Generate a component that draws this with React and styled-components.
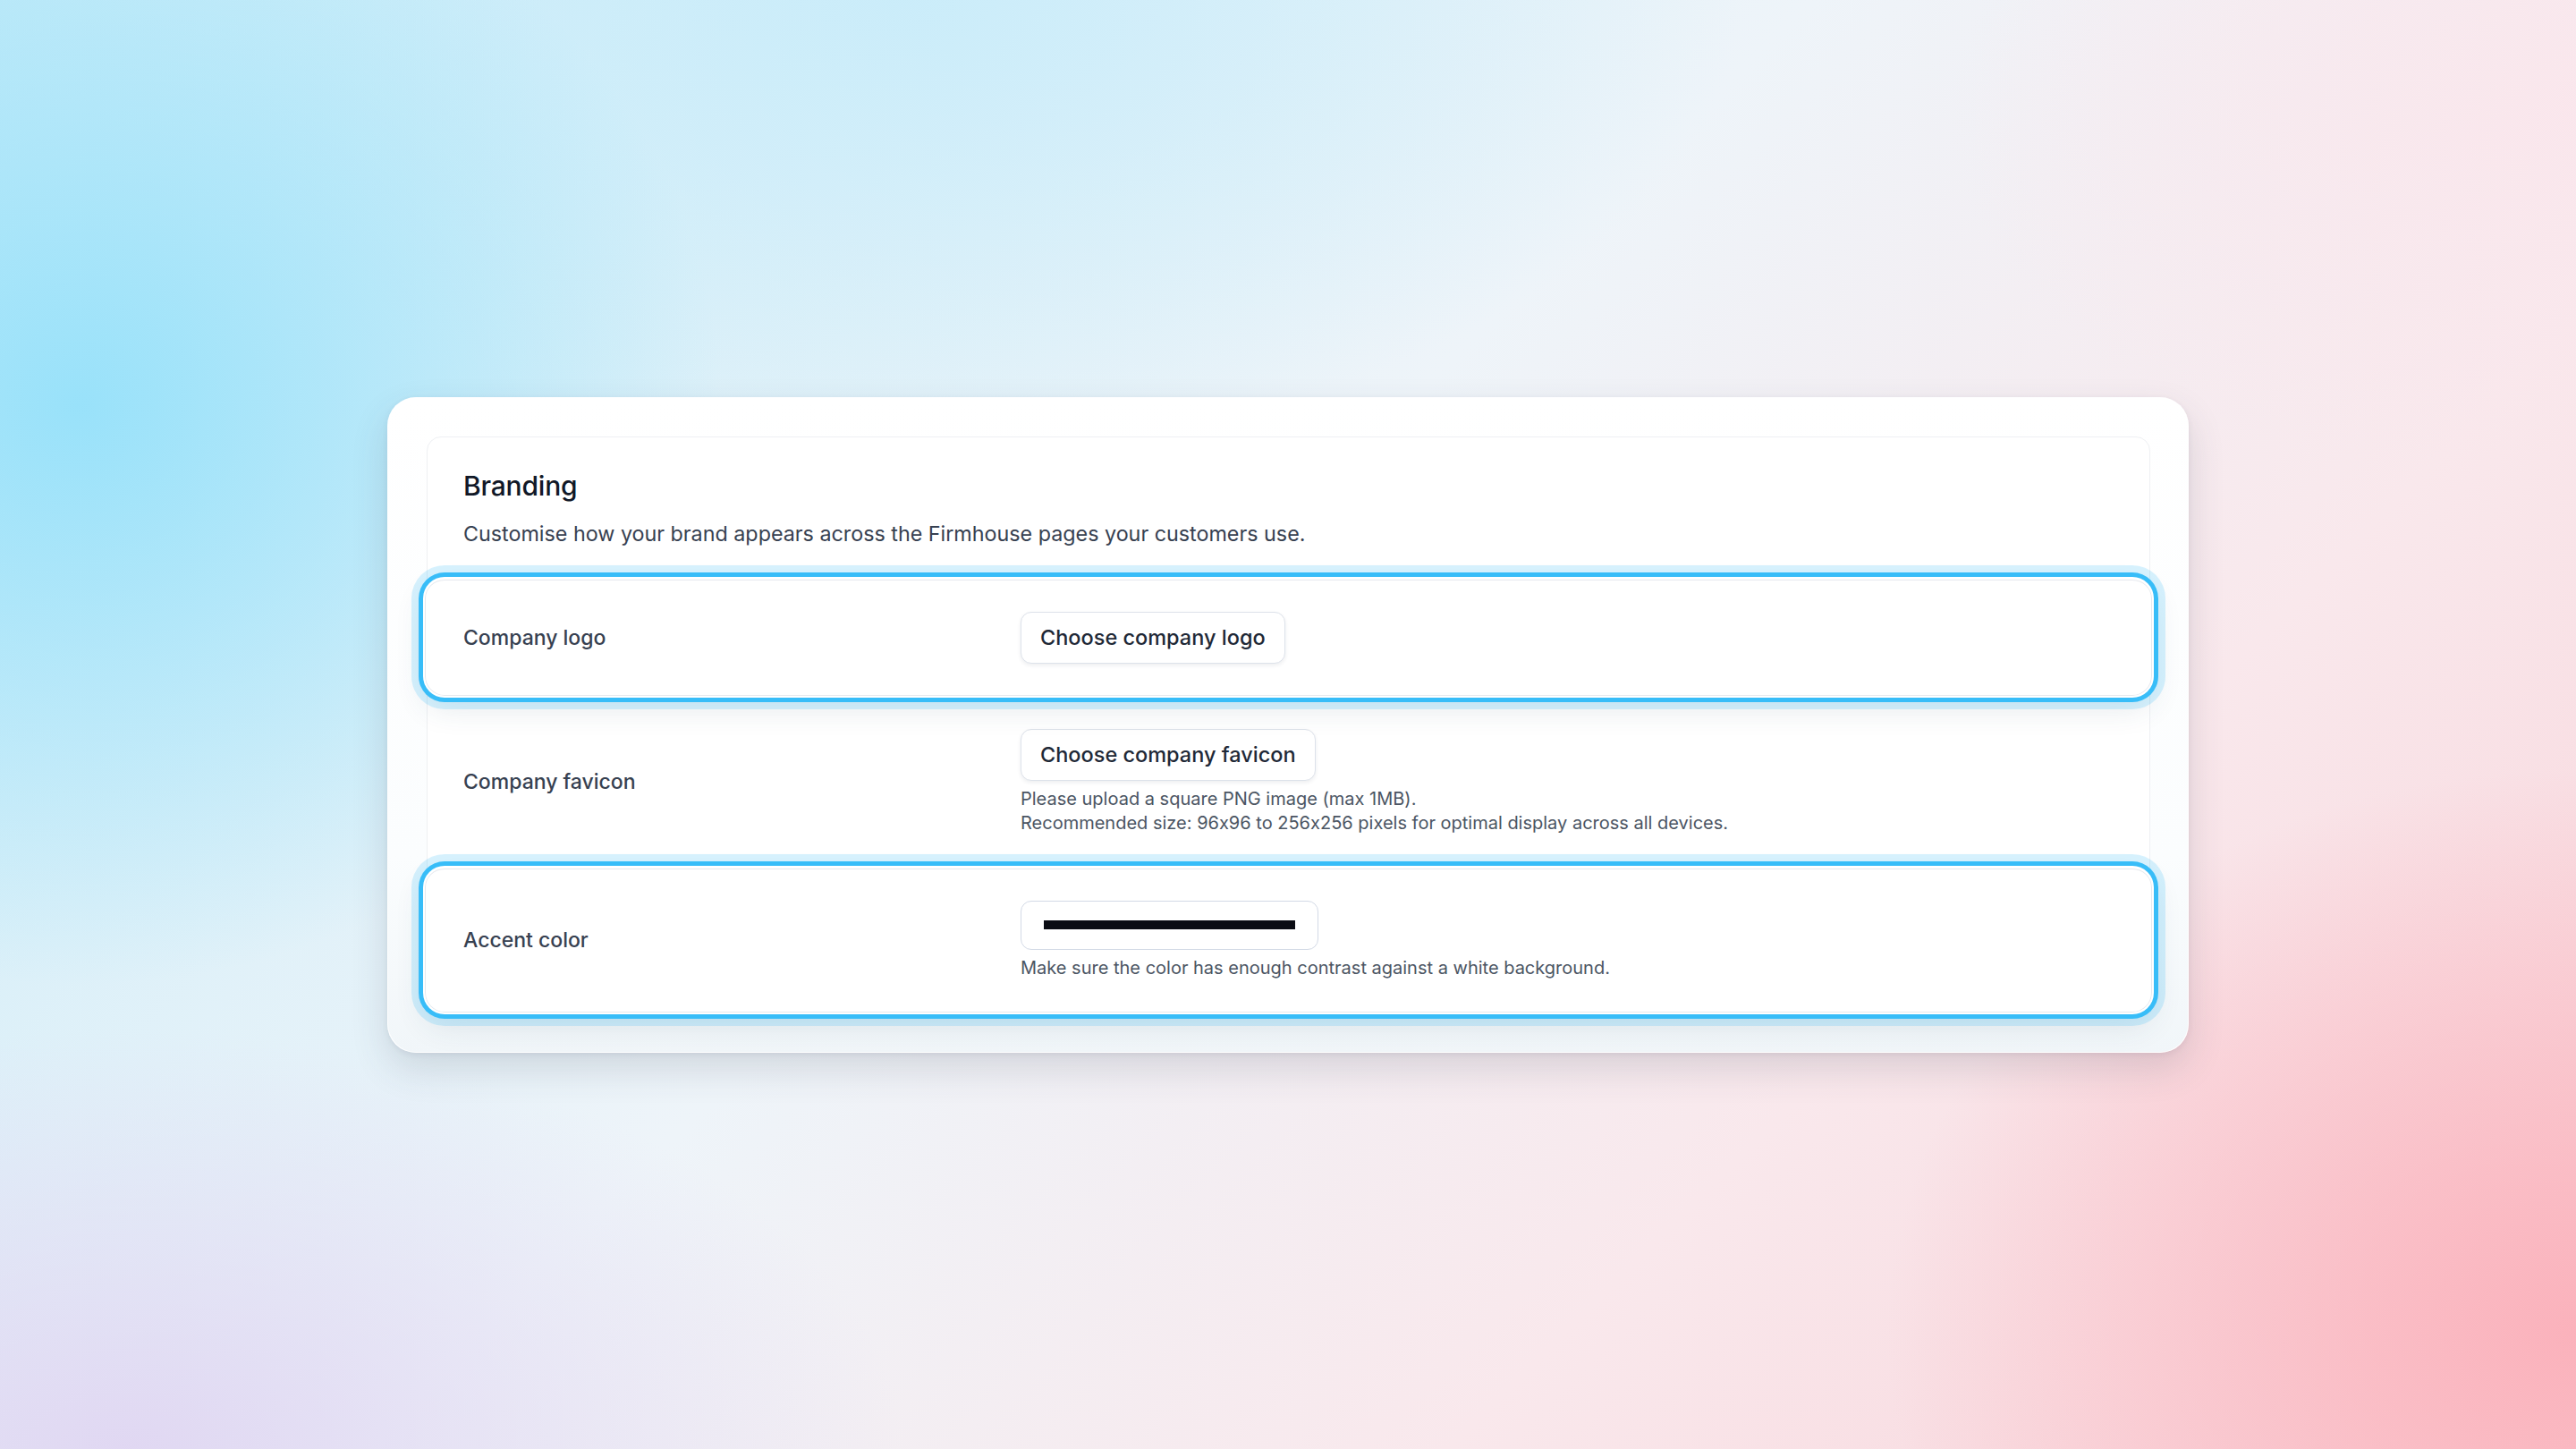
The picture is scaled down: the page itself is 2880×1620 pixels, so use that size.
import React from "react";
import styled, { createGlobalStyle } from "styled-components";

const GlobalStyle = createGlobalStyle`
  html, body {
    margin: 0;
    padding: 0;
  }
  body {
    font-family: "Inter", "Noto Sans", "Liberation Sans", sans-serif;
    font-feature-settings: "calt" 0;
    -webkit-font-smoothing: antialiased;
  }
  * {
    box-sizing: border-box;
  }
`;

const rows = [
  {
    label: "Company logo",
    highlighted: true,
    button: "Choose company logo",
  },
  {
    label: "Company favicon",
    button: "Choose company favicon",
    help: [
      "Please upload a square PNG image (max 1MB).",
      "Recommended size: 96x96 to 256x256 pixels for optimal display across all devices.",
    ],
  },
  {
    label: "Accent color",
    highlighted: true,
    color: "#0b0d14",
    help: ["Make sure the color has enough contrast against a white background."],
  },
];

const App = () => {
  return (
    <>
      <GlobalStyle />
      <Page>
        <Frame>
          <Panel>
            <Header>
              <Title>Branding</Title>
              <Description>
                Customise how your brand appears across the Firmhouse pages your
                customers use.
              </Description>
            </Header>
            {rows.map((row) => (
              <Row key={row.label} $highlighted={row.highlighted}>
                <Label>{row.label}</Label>
                <Field>
                  {row.button && <ChooseButton>{row.button}</ChooseButton>}
                  {row.color && (
                    <ColorInput>
                      <Swatch $color={row.color} />
                    </ColorInput>
                  )}
                  {row.help && (
                    <Help>
                      {row.help.map((line) => (
                        <p key={line}>{line}</p>
                      ))}
                    </Help>
                  )}
                </Field>
              </Row>
            ))}
          </Panel>
        </Frame>
      </Page>
    </>
  );
};

export default App;

const Page = styled.div`
  width: 2880px;
  height: 1620px;
  display: flex;
  align-items: center;
  justify-content: center;
  overflow: hidden;
  background:
    radial-gradient(ellipse 1000px 900px at 3% 28%, rgba(150, 225, 250, 0.95), rgba(150, 225, 250, 0) 72%),
    radial-gradient(ellipse 1300px 700px at 35% 0%, rgba(200, 236, 250, 0.85), rgba(200, 236, 250, 0) 72%),
    radial-gradient(ellipse 1100px 900px at 100% 92%, rgba(251, 176, 186, 0.95), rgba(251, 176, 186, 0) 70%),
    radial-gradient(ellipse 1200px 650px at 5% 100%, rgba(224, 214, 242, 0.95), rgba(224, 214, 242, 0) 72%),
    radial-gradient(ellipse 1000px 600px at 100% 8%, rgba(250, 230, 236, 0.9), rgba(250, 230, 236, 0) 70%),
    linear-gradient(135deg, #c6ebf8 0%, #eef4f9 45%, #f9e8ec 72%, #f8d2d8 100%);
`;

const Frame = styled.div`
  width: 2014px;
  padding: 43px 42px 43px 43px;
  border-radius: 32px;
  background: linear-gradient(180deg, #ffffff 0%, #fbfdfe 70%, #f1f6f9 100%);
  border: 1px solid rgba(255, 255, 255, 0.9);
  box-shadow: 0 18px 40px rgba(60, 70, 90, 0.16), 0 2px 6px rgba(60, 70, 90, 0.08);
`;

const Panel = styled.div`
  background: #fff;
  border: 1px solid #eef0f3;
  border-radius: 16px;
  display: flex;
  flex-direction: column;
`;

const Header = styled.div`
  padding: 36px 40px 34px;
`;

const Title = styled.h2`
  margin: 0;
  font-size: 30px;
  line-height: 36px;
  font-weight: 500;
  color: #111827;
  letter-spacing: -0.2px;
`;

const Description = styled.p`
  margin: 20px 0 0;
  font-size: 23.3px;
  line-height: 32px;
  color: #374151;
`;

const Row = styled.div`
  position: relative;
  display: grid;
  grid-template-columns: 623px 1fr;
  align-items: center;
  padding: 36px 40px;
  background: #fff;
  border-top: 1px solid #eef0f3;

  ${({ $highlighted }) =>
    $highlighted &&
    `
    z-index: 1;
    margin: 0 -3px;
    padding: 36px 43px;
    border-radius: 22px;
    border-top-color: transparent;
    box-shadow:
      inset 0 0 0 1px #e6e9ee,
      0 0 0 2px #ffffff,
      0 0 0 7px #38bdf8,
      0 0 0 15px rgba(56, 189, 248, 0.2),
      0 14px 34px rgba(40, 70, 100, 0.12);
  `}
`;

const Label = styled.div`
  font-size: 23px;
  font-weight: 500;
  color: #374151;
`;

const Field = styled.div`
  display: flex;
  flex-direction: column;
  align-items: flex-start;
`;

const ChooseButton = styled.button`
  height: 58px;
  padding: 0 21px;
  border: 1.5px solid #dde2ea;
  border-radius: 12px;
  background: #fff;
  box-shadow: 0 2px 4px rgba(30, 41, 59, 0.08);
  font-family: inherit;
  font-feature-settings: "calt" 0;
  font-size: 23.5px;
  font-weight: 500;
  color: #1f2937;
  cursor: pointer;
`;

const ColorInput = styled.div`
  width: 333px;
  height: 55px;
  display: flex;
  align-items: center;
  justify-content: center;
  border: 1.5px solid #d3dae6;
  border-radius: 12px;
  background: #fff;
`;

const Swatch = styled.span`
  width: 281px;
  height: 10px;
  background: ${({ $color }) => $color};
`;

const Help = styled.div`
  margin-top: 7px;

  p {
    margin: 0;
    font-size: 20px;
    line-height: 27px;
    color: #4b5563;
  }
`;
